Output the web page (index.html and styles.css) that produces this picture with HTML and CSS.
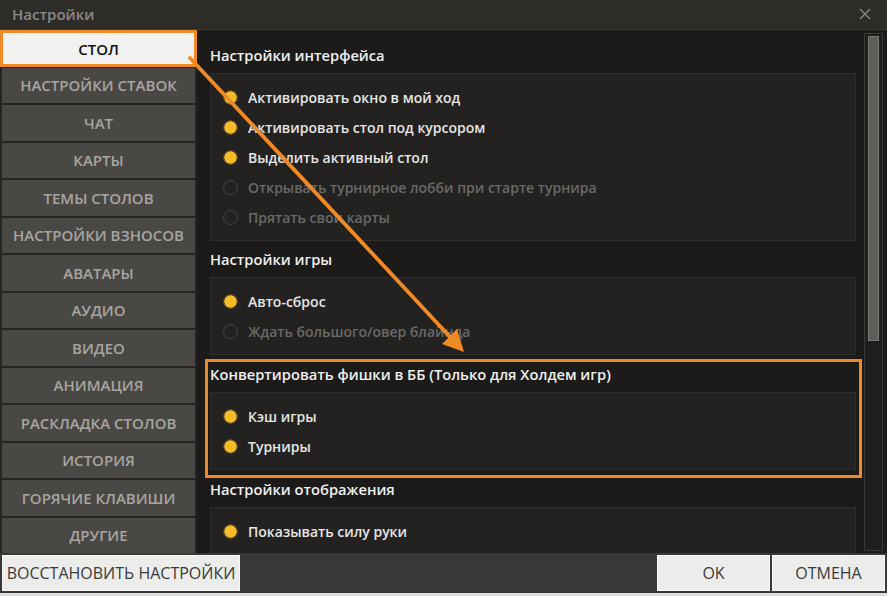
FILE: index.html
```html
<!DOCTYPE html>
<html lang="ru">
<head>
<meta charset="utf-8">
<title>Настройки</title>
<link rel="stylesheet" href="styles.css">
</head>
<body>
<div class="window">
  <div class="titlebar">
    <span class="title">Настройки</span>
    <svg class="close" width="12" height="12" viewBox="0 0 12 12"><path d="M1 1 L11 11 M11 1 L1 11" stroke="#8c8a86" stroke-width="1.3" fill="none"/></svg>
  </div>
  <div class="main">
    <nav class="sidebar">
      <div class="nav-item active">СТОЛ</div>
      <div class="nav-item">НАСТРОЙКИ СТАВОК</div>
      <div class="nav-item">ЧАТ</div>
      <div class="nav-item">КАРТЫ</div>
      <div class="nav-item">ТЕМЫ СТОЛОВ</div>
      <div class="nav-item">НАСТРОЙКИ ВЗНОСОВ</div>
      <div class="nav-item">АВАТАРЫ</div>
      <div class="nav-item">АУДИО</div>
      <div class="nav-item">ВИДЕО</div>
      <div class="nav-item">АНИМАЦИЯ</div>
      <div class="nav-item">РАСКЛАДКА СТОЛОВ</div>
      <div class="nav-item">ИСТОРИЯ</div>
      <div class="nav-item">ГОРЯЧИЕ КЛАВИШИ</div>
      <div class="nav-item">ДРУГИЕ</div>
    </nav>
    <div class="panel">
      <div class="content">
        <section class="section first">
          <div class="heading">Настройки интерфейса</div>
          <div class="group">
            <div class="row"><span class="radio on"></span><span class="label">Активировать окно в мой ход</span></div>
            <div class="row"><span class="radio on"></span><span class="label">Активировать стол под курсором</span></div>
            <div class="row"><span class="radio on"></span><span class="label">Выделить активный стол</span></div>
            <div class="row disabled"><span class="radio"></span><span class="label">Открывать турнирное лобби при старте турнира</span></div>
            <div class="row disabled"><span class="radio"></span><span class="label">Прятать свои карты</span></div>
          </div>
        </section>
        <section class="section">
          <div class="heading">Настройки игры</div>
          <div class="group">
            <div class="row"><span class="radio on"></span><span class="label">Авто-сброс</span></div>
            <div class="row disabled"><span class="radio"></span><span class="label">Ждать большого/овер блайнда</span></div>
          </div>
        </section>
        <section class="section highlight">
          <div class="heading">Конвертировать фишки в ББ (Только для Холдем игр)</div>
          <div class="group">
            <div class="row"><span class="radio on"></span><span class="label">Кэш игры</span></div>
            <div class="row"><span class="radio on"></span><span class="label">Турниры</span></div>
          </div>
        </section>
        <section class="section after-highlight">
          <div class="heading">Настройки отображения</div>
          <div class="group">
            <div class="row"><span class="radio on"></span><span class="label">Показывать силу руки</span></div>
          </div>
        </section>
      </div>
      <div class="scrollbar"><div class="thumb"></div></div>
    </div>
  </div>
  <div class="footer">
    <button class="btn reset">ВОССТАНОВИТЬ НАСТРОЙКИ</button>
    <div class="spacer"></div>
    <button class="btn ok">OK</button>
    <button class="btn cancel">ОТМЕНА</button>
  </div>
  <div class="bottom-strip"></div>
  <svg class="arrow" width="887" height="596" viewBox="0 0 887 596">
    <line x1="190" y1="58" x2="452" y2="339" stroke="#f08a26" stroke-width="3.8" stroke-linecap="round"/>
    <polygon points="464,352 442,344 457,329" fill="#f08a26"/>
  </svg>
</div>
</body>
</html>
```
FILE: styles.css
```css
* { box-sizing: border-box; }
html, body { margin: 0; padding: 0; }
body {
  width: 887px;
  height: 596px;
  overflow: hidden;
  background: #1c1b19;
  font-family: "Open Sans", "Noto Sans", sans-serif;
}
.window {
  position: relative;
  width: 887px;
  height: 596px;
  display: flex;
  flex-direction: column;
  background: #1c1b19;
}
.titlebar {
  height: 30px;
  flex: none;
  display: flex;
  align-items: center;
  justify-content: space-between;
  padding: 0 16px 1px 12px;
  background: #2e2c29;
  border-bottom: 1px solid #3c3a37;
}
.title {
  color: #8b8884;
  font-size: 15px;
  font-weight: 600;
}
.close { display: block; }
.main {
  flex: none;
  height: 523px;
  display: flex;
}
.sidebar {
  width: 197px;
  flex: none;
  display: flex;
  flex-direction: column;
  gap: 2px;
  padding: 0 2px;
  background: #262422;
}
.nav-item {
  height: 35.5px;
  flex: none;
  display: flex;
  align-items: center;
  justify-content: center;
  background: #4a4845;
  color: #a8a5a0;
  font-size: 15px;
  font-weight: 600;
  white-space: nowrap;
}
.nav-item.active {
  margin: 0 -2px;
  height: 37px;
  margin-bottom: -1.5px;
  background: #f1f1f0;
  border: 3px solid #f08a26;
  color: #111;
}
.panel {
  flex: 1;
  display: flex;
  min-width: 0;
  background: #1c1b19;
}
.content {
  width: 667px;
  flex: none;
  padding: 15px 8px 0 13px;
  overflow: hidden;
}
.heading {
  height: 20px;
  line-height: 20px;
  margin-bottom: 8px;
  color: #efefef;
  font-size: 14.7px;
  font-weight: 600;
  white-space: nowrap;
}
.section { margin-top: 8px; }
.section.first { margin-top: 0; }
.group {
  width: 646px;
  padding: 8px 0;
  background: #232220;
  border: 1px solid #2f2e2b;
}
.row {
  height: 30px;
  display: flex;
  align-items: center;
  gap: 10px;
  padding-left: 12px;
  color: #e6e6e6;
  font-size: 14px;
  font-weight: 600;
  white-space: nowrap;
}
.row.disabled { color: #6a6967; }
.radio {
  width: 15px;
  height: 15px;
  flex: none;
  border-radius: 50%;
  border: 1.5px solid #454442;
}
.radio.on {
  border: none;
  background: radial-gradient(circle, #f7bb28 0 5.8px, #5a4a22 6.4px 7.5px, transparent 7.6px);
}
.section.highlight {
  margin-top: 4px;
  margin-left: -5px;
  margin-right: -6px;
  padding: 2px 3px 5px 2px;
  border: 3px solid #f08a26;
}
.section.after-highlight { margin-top: 1px; }
.scrollbar {
  width: 19px;
  flex: none;
  margin: 3px 0 2px;
  padding: 2px 3px;
  background: #1f1e1c;
  border: 1px solid #3a3936;
}
.thumb {
  height: 305px;
  background: #5e5d5a;
  border: 1px solid #7a7976;
}
.footer {
  flex: none;
  height: 40px;
  display: flex;
  gap: 2px;
  padding: 2px;
  background: #3a3836;
}
.spacer { flex: 1; }
.btn {
  height: 36px;
  margin: 0;
  padding: 0;
  background: #ececeb;
  border: 1px solid #f8f8f8;
  color: #3a3a3a;
  font-family: "Open Sans", "Noto Sans", sans-serif;
  font-size: 16px;
  white-space: nowrap;
}
.btn.reset { width: 238px; }
.btn.ok { width: 113px; }
.btn.cancel { width: 113px; }
.bottom-strip {
  flex: none;
  height: 3px;
  background: #dcdcdb;
}
.arrow {
  position: absolute;
  left: 0;
  top: 0;
  pointer-events: none;
}
```
